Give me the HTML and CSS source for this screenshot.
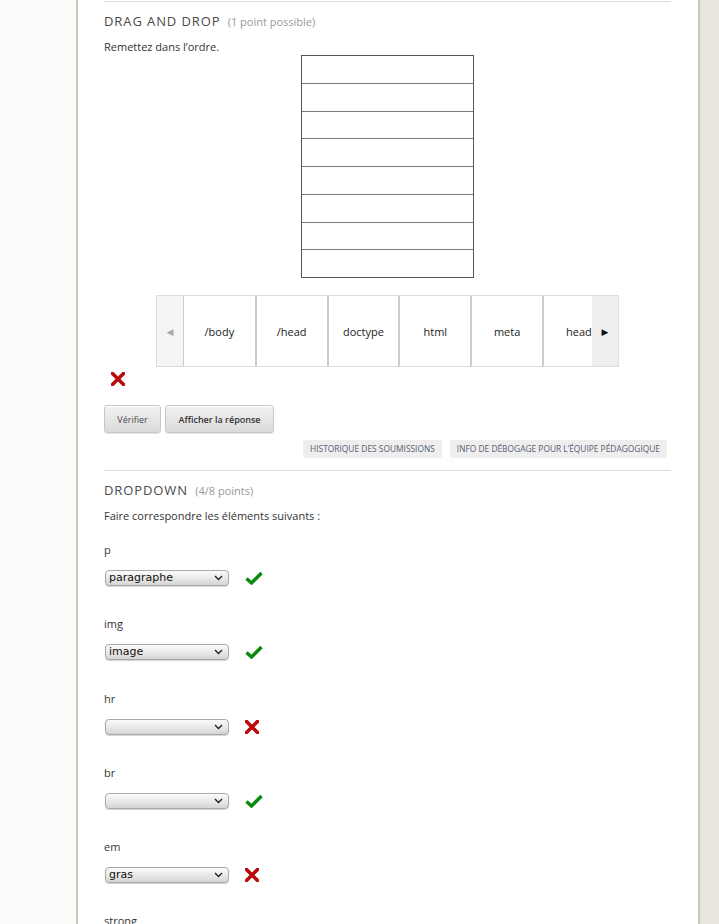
FILE: index.html
```html
<!DOCTYPE html>
<html lang="fr">
<head>
<meta charset="utf-8">
<link rel="stylesheet" href="styles.css">
</head>
<body>
<div class="page">
  <div class="gutter"></div>
  <main class="course">
    <section class="problem">
      <hr class="rule rule-top">
      <h2 class="ptitle">DRAG AND DROP <span class="points">(1 point possible)</span></h2>
      <p class="prompt">Remettez dans l’ordre.</p>
      <div class="target">
        <div class="slot"></div><div class="slot"></div><div class="slot"></div><div class="slot"></div>
        <div class="slot"></div><div class="slot"></div><div class="slot"></div><div class="slot"></div>
      </div>
      <div class="slider">
        <div class="arrow arrow-left">&#9664;</div>
        <div class="viewport">
          <div class="track">
            <div class="item">/body</div>
            <div class="item">/head</div>
            <div class="item">doctype</div>
            <div class="item">html</div>
            <div class="item">meta</div>
            <div class="item">head</div>
            <div class="item">body</div>
          </div>
        </div>
        <div class="arrow arrow-right">&#9654;</div>
      </div>
      <div class="status">
        <svg class="icon-x" width="14" height="14" viewBox="0 0 14 14"><path d="M1.5 1.5 L12.5 12.5 M12.5 1.5 L1.5 12.5" stroke="#b80a0a" stroke-width="3.6" stroke-linecap="square"/></svg>
      </div>
      <div class="actions">
        <button class="btn btn-check">Vérifier</button>
        <button class="btn btn-show">Afficher la réponse</button>
      </div>
      <div class="staff">
        <span class="staff-btn">HISTORIQUE DES SOUMISSIONS</span>
        <span class="staff-btn">INFO DE DÉBOGAGE POUR L’ÉQUIPE PÉDAGOGIQUE</span>
      </div>
      <hr class="rule rule-mid">
    </section>

    <section class="problem">
      <h2 class="ptitle ptitle-2">DROPDOWN <span class="points">(4/8 points)</span></h2>
      <p class="prompt">Faire correspondre les éléments suivants :</p>

      <div class="match">
        <div class="label">p</div>
        <div class="row"><div class="select"><span>paragraphe</span><svg width="9" height="6" viewBox="0 0 9 6"><path d="M1 1 L4.5 4.5 L8 1" fill="none" stroke="#222" stroke-width="1.4"/></svg></div>
        <svg class="icon-ok" width="18" height="14" viewBox="0 0 18 14"><path d="M1.5 7.5 L6.5 12 L16.5 2" fill="none" stroke="#0a8a0a" stroke-width="3.4"/></svg></div>
      </div>
      <div class="match">
        <div class="label">img</div>
        <div class="row"><div class="select"><span>image</span><svg width="9" height="6" viewBox="0 0 9 6"><path d="M1 1 L4.5 4.5 L8 1" fill="none" stroke="#222" stroke-width="1.4"/></svg></div>
        <svg class="icon-ok" width="18" height="14" viewBox="0 0 18 14"><path d="M1.5 7.5 L6.5 12 L16.5 2" fill="none" stroke="#0a8a0a" stroke-width="3.4"/></svg></div>
      </div>
      <div class="match">
        <div class="label">hr</div>
        <div class="row"><div class="select"><span></span><svg width="9" height="6" viewBox="0 0 9 6"><path d="M1 1 L4.5 4.5 L8 1" fill="none" stroke="#222" stroke-width="1.4"/></svg></div>
        <svg class="icon-bad" width="14" height="14" viewBox="0 0 14 14"><path d="M1.5 1.5 L12.5 12.5 M12.5 1.5 L1.5 12.5" stroke="#b80a0a" stroke-width="3.6" stroke-linecap="square"/></svg></div>
      </div>
      <div class="match">
        <div class="label">br</div>
        <div class="row"><div class="select"><span></span><svg width="9" height="6" viewBox="0 0 9 6"><path d="M1 1 L4.5 4.5 L8 1" fill="none" stroke="#222" stroke-width="1.4"/></svg></div>
        <svg class="icon-ok" width="18" height="14" viewBox="0 0 18 14"><path d="M1.5 7.5 L6.5 12 L16.5 2" fill="none" stroke="#0a8a0a" stroke-width="3.4"/></svg></div>
      </div>
      <div class="match">
        <div class="label">em</div>
        <div class="row"><div class="select"><span>gras</span><svg width="9" height="6" viewBox="0 0 9 6"><path d="M1 1 L4.5 4.5 L8 1" fill="none" stroke="#222" stroke-width="1.4"/></svg></div>
        <svg class="icon-bad" width="14" height="14" viewBox="0 0 14 14"><path d="M1.5 1.5 L12.5 12.5 M12.5 1.5 L1.5 12.5" stroke="#b80a0a" stroke-width="3.6" stroke-linecap="square"/></svg></div>
      </div>
      <div class="match">
        <div class="label">strong</div>
      </div>
    </section>
  </main>
  <div class="aside"></div>
</div>
</body>
</html>
```
FILE: styles.css
```css
html, body {
  margin: 0;
  padding: 0;
  height: 924px;
  overflow: hidden;
}
body {
  font-family: "Open Sans", "DejaVu Sans", sans-serif;
  color: #333;
  background: #e8e5df;
}
.page {
  display: flex;
  height: 924px;
}
.gutter {
  width: 76px;
  background: #fbfbfa;
  flex: none;
}
.course {
  flex: none;
  background: #fff;
  border-left: 2px solid #cdc8bb;
  border-right: 2px solid #c9c5ba;
  padding: 0 27px 0 26px;
  box-sizing: content-box;
  width: 567px;
}
.aside {
  flex: 1;
  background: #e8e5df;
}
.rule {
  border: 0;
  height: 1px;
  background: #dddddd;
  margin: 0;
}
.rule-top { margin-top: 1px; }
.ptitle {
  margin: 10px 0 0;
  font-size: 13px;
  font-weight: 400;
  letter-spacing: 0.9px;
  color: #4a4a4a;
  line-height: 18px;
}
.ptitle-2 { margin-top: 10px; }
.points {
  font-size: 11px;
  letter-spacing: 0;
  color: #999;
  margin-left: 3px;
}
.prompt {
  margin: 8px 0 0;
  font-size: 11px;
  line-height: 16px;
  color: #333;
}
.target {
  width: 171px;
  margin: 0 auto;
  border: 1px solid #555;
}
.slot {
  height: 26.75px;
  border-top: 1px solid #7a7a7a;
}
.slot:first-child { border-top: 0; }
.slider {
  width: 463px;
  height: 72px;
  margin: 17px auto 0;
  display: flex;
  box-sizing: border-box;
  border: 1px solid #ddd;
}
.arrow {
  flex: none;
  display: flex;
  align-items: center;
  justify-content: center;
  font-size: 9px;
}
.arrow-left {
  width: 26px;
  background: #f5f5f5;
  color: #aaa;
  border-right: 1px solid #ccc;
}
.arrow-right {
  width: 26px;
  background: #eee;
  color: #111;
}
.viewport {
  flex: 1;
  overflow: hidden;
}
.track {
  display: flex;
  height: 100%;
}
.item {
  flex: none;
  box-sizing: border-box;
  width: 71.8px;
  border-right: 1px solid #ccc;
  border-left: 1px solid #ccc;
  display: flex;
  align-items: center;
  justify-content: center;
  font-size: 11px;
  color: #222;
  background: #fff;
}
.item:first-child { border-left: 0; }
.status {
  height: 20px;
  padding: 5px 0 0 7px;
}
.icon-x { display: block; }
.actions {
  margin-top: 13px;
  display: flex;
  gap: 4px;
}
.btn {
  font-family: "Open Sans", "DejaVu Sans", sans-serif;
  font-size: 9px;
  height: 28px;
  padding: 0;
  border: 1px solid #c8c8c8;
  border-radius: 3px;
  background: linear-gradient(#f2f1f1, #dcdbdb);
  box-shadow: inset 0 1px 0 #fff, 0 1px 0 #e6e6e6;
}
.btn-check { color: #4a4a4a; width: 57px; }
.btn-show { color: #333; font-weight: 600; width: 109px; }
.staff {
  display: flex;
  justify-content: flex-end;
  gap: 8px;
  margin-top: 7px;
  padding-right: 4px;
}
.staff-btn {
  font-size: 8.4px;
  height: 18px;
  line-height: 18px;
  padding: 0 7px;
  background: #eeeeee;
  border-radius: 3px;
  color: #56616e;
}
.rule-mid { margin-top: 12px; }
.label {
  font-size: 11px;
  line-height: 16px;
  margin-top: 18px;
}
.match + .match .label { margin-top: 30.25px; }
.row {
  display: flex;
  align-items: center;
  gap: 16px;
  margin-top: 12px;
  height: 16px;
}
.select {
  width: 114px;
  height: 14px;
  margin-left: 1px;
  border: 1px solid #a9a9a9;
  border-radius: 4px;
  background: linear-gradient(#fbfbfb, #e8e6e4 60%, #d6d4d2);
  box-shadow: 0 1px 1px rgba(0,0,0,0.18);
  display: flex;
  align-items: center;
  justify-content: space-between;
  padding: 0 5px 0 3px;
  box-sizing: content-box;
  font-size: 11px;
  color: #111;
  font-family: "DejaVu Sans", sans-serif;
}
.select span { line-height: 14px; }
```
